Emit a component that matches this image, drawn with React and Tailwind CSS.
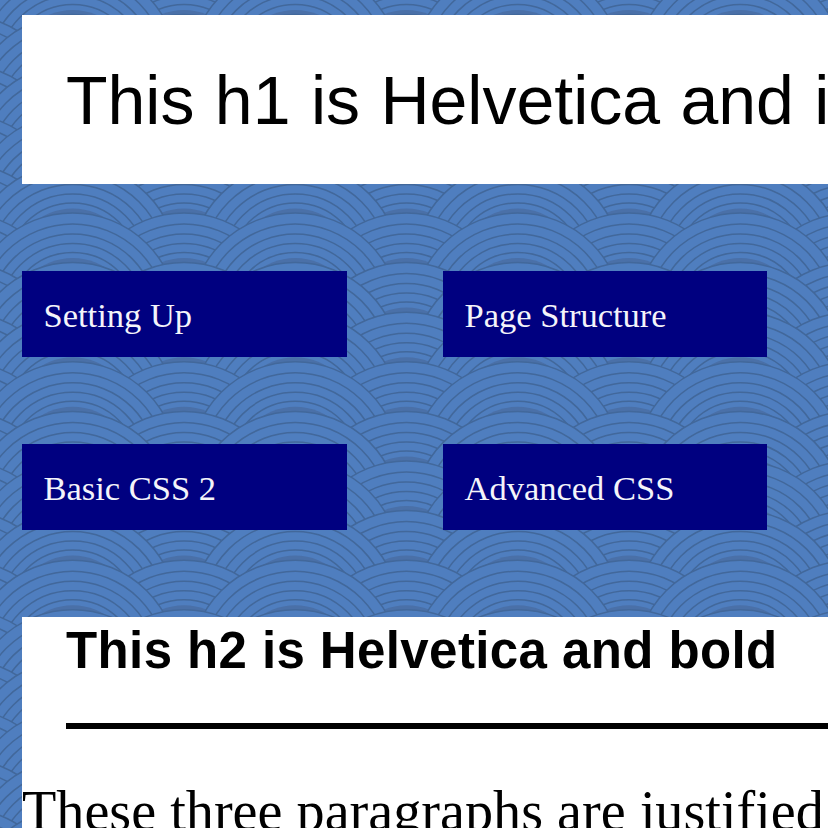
import React from "react";

// seigaiha wave background, rows painted top to bottom so lower scales overlap
const ROW_H = 49.6;
const COL_W = 111.25;

const scales = [];
for (let row = -1; row < 18; row++) {
  const cy = 14.6 + row * ROW_H + 105;
  // behind columns first, then the front ones
  for (let col = 0; col < 8; col++) scales.push({ cx: 184 - COL_W * 2 + col * COL_W * 2, cy, k: `b${row}-${col}` });
  for (let col = 0; col < 8; col++) scales.push({ cx: 72.7 - COL_W * 2 + col * COL_W * 2, cy, k: `f${row}-${col}` });
}

const Scale = ({ cx, cy }) => (
  <g>
    {[105, 94, 84, 74.5, 65.5].map((r) => (
      <circle key={r} cx={cx} cy={cy} r={r} fill="#4f7ebf" stroke="#42689b" strokeWidth="1.5" />
    ))}
    <circle cx={cx} cy={cy} r="60" fill="#4a70a8" />
  </g>
);

const WaveBackground = () => (
  <svg className="absolute -left-[6px] -top-[6px] blur-[0.6px]" width="840" height="840" viewBox="-6 -6 840 840">
    <rect x="-6" y="-6" width="840" height="840" fill="#4f7ebf" />
    {scales.map((s) => (
      <Scale key={s.k} cx={s.cx} cy={s.cy} />
    ))}
  </svg>
);

const NavBox = ({ children }) => (
  <div className="h-[86px] bg-[#000080] text-[#f4f4fa] flex items-center pl-[21.5px] pt-[4px] text-[34.5px] whitespace-nowrap">
    {children}
  </div>
);

export default function App() {
  return (
    <div className="relative w-[828px] h-[828px] overflow-hidden font-['Liberation_Serif',serif]">
      <WaveBackground />
      <div className="relative flex flex-col pt-[15px] pl-[22px]">
        <div className="w-[900px] h-[169px] bg-white flex items-center pl-[44px] pt-[1px]">
          <h1 className="font-['Liberation_Sans',sans-serif] text-[68px] [word-spacing:1.5px] text-black whitespace-nowrap">
            This h1 is Helvetica and italic
          </h1>
        </div>

        <div className="mt-[87px] grid grid-cols-[325px_324px] gap-x-[96px] gap-y-[87px]">
          <NavBox>Setting Up</NavBox>
          <NavBox>Page Structure</NavBox>
          <NavBox>Basic CSS 2</NavBox>
          <NavBox>Advanced CSS</NavBox>
        </div>

        <div className="mt-[87px] w-[900px] h-[300px] bg-white">
          <div className="pl-[44px]">
            <h2 className="font-['Liberation_Sans',sans-serif] font-bold text-[51px] tracking-[0.4px] leading-[68px] text-black whitespace-nowrap">
              This h2 is Helvetica and bold
            </h2>
            <hr className="mt-[38px] border-0 h-[6px] bg-black" />
          </div>
          <p className="mt-[48px] text-[56.2px] leading-[68px] text-black whitespace-nowrap">
            These three paragraphs are justified
          </p>
        </div>
      </div>
    </div>
  );
}
